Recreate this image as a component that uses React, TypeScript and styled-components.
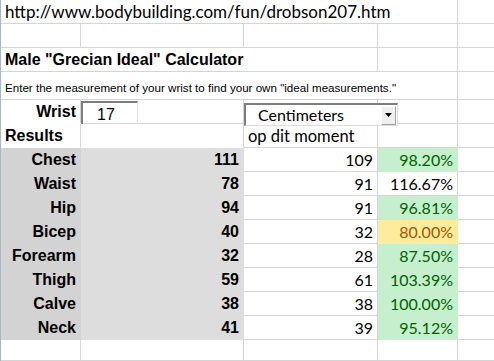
import { Fragment } from "react";
import styled, { createGlobalStyle } from "styled-components";

type Row = {
  part: string;
  ideal: number;
  now: number;
  pct: string;
  tone: "good" | "warn" | "none";
};

const rows: Row[] = [
  { part: "Chest", ideal: 111, now: 109, pct: "98.20%", tone: "good" },
  { part: "Waist", ideal: 78, now: 91, pct: "116.67%", tone: "none" },
  { part: "Hip", ideal: 94, now: 91, pct: "96.81%", tone: "good" },
  { part: "Bicep", ideal: 40, now: 32, pct: "80.00%", tone: "warn" },
  { part: "Forearm", ideal: 32, now: 28, pct: "87.50%", tone: "good" },
  { part: "Thigh", ideal: 59, now: 61, pct: "103.39%", tone: "good" },
  { part: "Calve", ideal: 38, now: 38, pct: "100.00%", tone: "good" },
  { part: "Neck", ideal: 41, now: 39, pct: "95.12%", tone: "good" },
];

const tones = {
  good: { bg: "#c6efce", fg: "#006100" },
  warn: { bg: "#ffeb9c", fg: "#9c5700" },
  none: { bg: "", fg: "#000" },
};

const Global = createGlobalStyle`
  html, body {
    margin: 0;
    padding: 0;
    background: #fff;
  }
`;

const Sheet = styled.div`
  width: 494px;
  height: 361px;
  overflow: hidden;
  display: grid;
  grid-template-columns: 80px 163px 134px 80px 37px;
  grid-template-rows: 24px 24px 24px 28px 24px 24px repeat(8, 24px) 21px;
  border-left: 1px solid #a9b6c6;
  box-sizing: border-box;
`;

type CellProps = {
  $span?: number;
  $fill?: string;
  $noBottom?: boolean;
  $align?: "left" | "right";
  $font?: "arial" | "calibri";
  $bold?: boolean;
  $size?: number;
  $color?: string;
};

const Cell = styled.div<CellProps>`
  grid-column: span ${(p) => p.$span || 1};
  position: relative;
  box-sizing: border-box;
  display: flex;
  align-items: flex-end;
  justify-content: ${(p) => (p.$align === "right" ? "flex-end" : "flex-start")};
  padding: 0 4px 3px 4px;
  white-space: nowrap;
  background: ${(p) => p.$fill || "#fff"};
  border-right: 1px solid ${(p) => p.$fill || "#d4d4d4"};
  border-bottom: 1px solid
    ${(p) => (p.$noBottom ? "transparent" : p.$fill || "#d4d4d4")};
  font-family: ${(p) =>
    p.$font === "calibri"
      ? '"Lato", "Open Sans", sans-serif'
      : '"Liberation Sans", Arial, sans-serif'};
  font-weight: ${(p) => (p.$bold ? 700 : 400)};
  font-size: ${(p) => p.$size || 16}px;
  color: ${(p) => p.$color || "#000"};
  line-height: 1;
`;

const WristBox = styled.div`
  box-sizing: border-box;
  width: 57px;
  height: 24px;
  margin: 1px 0 0 -4px;
  align-self: flex-start;
  border-top: 2px solid #7d7d7d;
  border-left: 2px solid #7d7d7d;
  border-right: 1px solid #e3e3e3;
  border-bottom: 1px solid #e3e3e3;
  font-family: "Liberation Sans", Arial, sans-serif;
  font-size: 16px;
  padding: 4px 0 0 14px;
`;

const Dropdown = styled.div`
  position: absolute;
  left: 0;
  top: 3px;
  z-index: 2;
  box-sizing: border-box;
  width: 154px;
  height: 23px;
  background: #fff;
  border-top: 2px solid #7d7d7d;
  border-left: 2px solid #7d7d7d;
  border-right: 1px solid #dcdcdc;
  border-bottom: 1px solid #dcdcdc;
  display: flex;
  align-items: center;
  justify-content: space-between;
  font-family: "Lato", "Open Sans", sans-serif;
  font-size: 16px;
  padding-left: 12px;
`;

const DropButton = styled.div`
  box-sizing: border-box;
  width: 15px;
  height: 19px;
  margin-right: 1px;
  background: #f0f0f0;
  border: 1px solid #fff;
  border-right-color: #a0a0a0;
  border-bottom-color: #a0a0a0;
  display: flex;
  align-items: center;
  justify-content: center;
`;

const App = () => {
  return (
    <>
      <Global />
      <Sheet>
        {/* row 1 */}
        <Cell $span={4} $font="calibri" $size={17}>
          http://www.bodybuilding.com/fun/drobson207.htm
        </Cell>
        <Cell />

        {/* row 2 */}
        <Cell />
        <Cell />
        <Cell />
        <Cell />
        <Cell />

        {/* row 3 */}
        <Cell $span={3} $bold $size={16}>
          Male "Grecian Ideal" Calculator
        </Cell>
        <Cell />
        <Cell />

        {/* row 4 */}
        <Cell $span={4} $size={11.6} style={{ paddingBottom: 5 }}>
          Enter the measurement of your wrist to find your own "ideal
          measurements."
        </Cell>
        <Cell />

        {/* wrist */}
        <Cell $align="right" $bold $noBottom>
          Wrist
        </Cell>
        <Cell>
          <WristBox>17</WristBox>
        </Cell>
        <Cell>
          <Dropdown>
            <span>Centimeters</span>
            <DropButton>
              <svg width="7" height="4" viewBox="0 0 7 4">
                <path d="M0 0h7L3.5 4z" fill="#000" />
              </svg>
            </DropButton>
          </Dropdown>
        </Cell>
        <Cell />
        <Cell />

        {/* results header */}
        <Cell $bold $noBottom>
          Results
        </Cell>
        <Cell $noBottom />
        <Cell $font="calibri" $size={16.5}>
          op dit moment
        </Cell>
        <Cell />
        <Cell />

        {rows.map((r) => (
          <Fragment key={r.part}>
            <Cell $fill="#d3d3d3" $align="right" $bold>
              {r.part}
            </Cell>
            <Cell $fill="#dddddd" $align="right" $bold>
              {r.ideal}
            </Cell>
            <Cell $align="right" $font="calibri">
              {r.now}
            </Cell>
            <Cell
              $align="right"
              $font="calibri"
              $fill={tones[r.tone].bg}
              $color={tones[r.tone].fg}
            >
              {r.pct}
            </Cell>
            <Cell />
          </Fragment>
        ))}

        {/* empty last row */}
        <Cell />
        <Cell />
        <Cell />
        <Cell />
        <Cell />
      </Sheet>
    </>
  );
};

export default App;
